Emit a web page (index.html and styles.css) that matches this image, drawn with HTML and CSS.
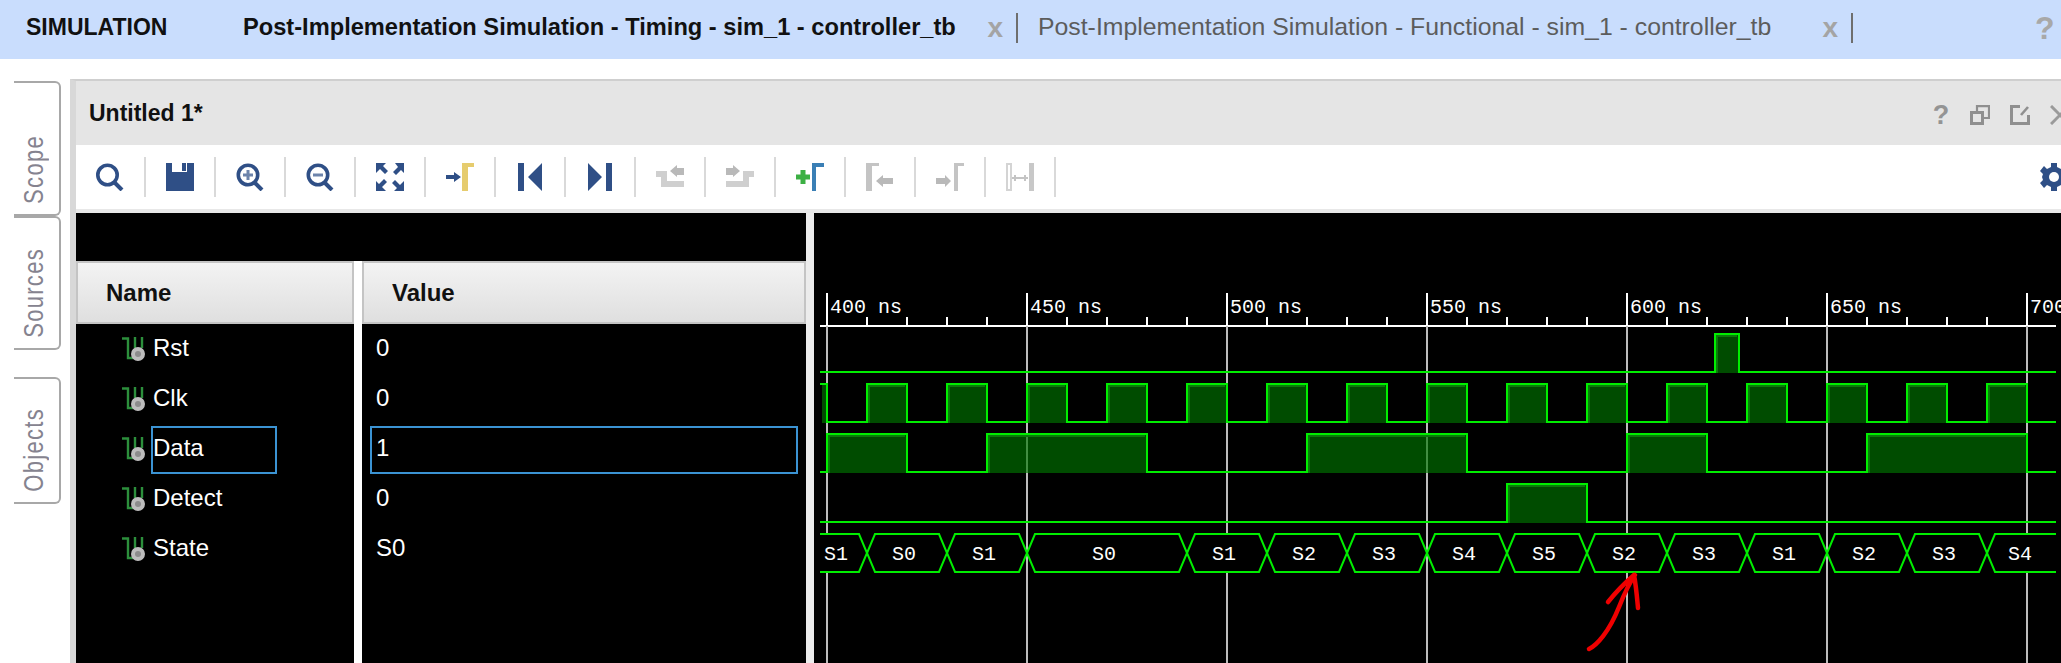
FILE: index.html
```html
<!DOCTYPE html>
<html lang="en">
<head>
    <meta charset="UTF-8">
    <meta name="viewport" content="width=device-width, initial-scale=1.0">
    <title>Simulation - Waveform</title>
    <link rel="stylesheet" href="styles.css">
</head>
<body>
    <div class="topbar">
        <div class="app-name">SIMULATION</div>
        <div class="tab tab-active">
            <span>Post-Implementation Simulation - Timing - sim_1 - controller_tb</span>
            <span class="tab-close">x</span>
        </div>
        <div class="tab">
            <span>Post-Implementation Simulation - Functional - sim_1 - controller_tb</span>
            <span class="tab-close">x</span>
        </div>
        <div class="top-help">?</div>
    </div>

    <div class="workspace">
        <div class="side-tabs">
            <div class="side-tab tab-scope"><span>Scope</span></div>
            <div class="side-tab tab-sources"><span>Sources</span></div>
            <div class="side-tab tab-objects"><span>Objects</span></div>
        </div>

        <div class="panel">
            <div class="titlebar">
                <div class="panel-title">Untitled 1*</div>
                <div class="title-tools">
                    <span class="title-help">?</span>
                    <svg class="title-icon" viewBox="0 0 20 20"><path d="M7 6V1.2H19V13H14" fill="none" stroke="#8f8f8f" stroke-width="2.2"/><rect x="1.5" y="7.5" width="11" height="11" fill="none" stroke="#8f8f8f" stroke-width="3"/></svg>
                    <svg class="title-icon" viewBox="0 0 20 20"><path d="M10 1.5H1.5V18.5H18.5V10" fill="none" stroke="#8f8f8f" stroke-width="3"/><path d="M11 10l7-8" stroke="#8f8f8f" stroke-width="2.6"/></svg>
                    <svg class="title-icon" viewBox="0 0 20 20"><path d="M1 1l18 18M19 1L1 19" fill="none" stroke="#9a9a9a" stroke-width="3"/></svg>
                </div>
            </div>

            <div class="toolbar">
                <div class="tool"><svg viewBox="0 0 28 28"><circle cx="11.5" cy="12" r="9.7" fill="none" stroke="#2f4f86" stroke-width="3.6"/><path d="M18 19l8 8" stroke="#2f4f86" stroke-width="4"/></svg></div>
                <div class="tool"><svg viewBox="0 0 28 28"><path d="M0 0h6v9h15V0h7v28H0z" fill="#2f4f86"/><path d="M16 0h4v8h-4z" fill="#2f4f86"/></svg></div>
                <div class="tool"><svg viewBox="0 0 28 28"><circle cx="12" cy="12" r="9.7" fill="none" stroke="#2f4f86" stroke-width="3.6"/><path d="M18 19l8 8" stroke="#2f4f86" stroke-width="4"/><path d="M12 7v10M7 12h10" stroke="#6d84ab" stroke-width="3"/></svg></div>
                <div class="tool"><svg viewBox="0 0 28 28"><circle cx="12" cy="12" r="9.7" fill="none" stroke="#2f4f86" stroke-width="3.6"/><path d="M18 19l8 8" stroke="#2f4f86" stroke-width="4"/><path d="M7 12h10" stroke="#6d84ab" stroke-width="3"/></svg></div>
                <div class="tool"><svg viewBox="0 0 28 28" fill="#2f4f86"><path d="M0 0h10L7 3l5 5-3 3-5-5-4 4zM28 0v10l-3-3-5 5-3-3 5-5-3-4zM0 28V18l3 3 5-5 3 3-5 5 4 4zM28 28H18l3-3-5-5 3-3 5 5 4-4z"/></svg></div>
                <div class="tool"><svg viewBox="0 0 28 28"><path d="M16 0h12v4H22v24h-6z" fill="#e6cc6e"/><path d="M0 12h8V9l7 5-7 5v-3H0z" fill="#2f4f86"/></svg></div>
                <div class="tool"><svg viewBox="0 0 28 28" fill="#2f4f86"><path d="M2 0h6v28H2zM26 0v28L12 14z"/></svg></div>
                <div class="tool"><svg viewBox="0 0 28 28" fill="#2f4f86"><path d="M20 0h6v28h-6zM2 0v28l14-14z"/></svg></div>
                <div class="tool"><svg viewBox="0 0 28 28"><path d="M0 11h8v10h20" fill="none" stroke="#cfcfcf" stroke-width="6"/><path d="M14 8l7-6v3h7v7h-7v2z" fill="#b9b9b9"/></svg></div>
                <div class="tool"><svg viewBox="0 0 28 28"><path d="M28 11h-8v10H0" fill="none" stroke="#cfcfcf" stroke-width="6"/><path d="M14 8L7 2v3H0v7h7v2z" fill="#b9b9b9"/></svg></div>
                <div class="tool"><svg viewBox="0 0 28 28"><path d="M0 14h14M7 7v14" stroke="#3cb044" stroke-width="5"/><path d="M18 28V2h10" fill="none" stroke="#3a7fb5" stroke-width="4"/></svg></div>
                <div class="tool"><svg viewBox="0 0 28 28"><path d="M0 28V0h13v3H6v25z" fill="#c4c4c4"/><path d="M10 18l7-6v3h10v6H17v3z" fill="#b9b9b9"/></svg></div>
                <div class="tool"><svg viewBox="0 0 28 28"><path d="M18 28V0h10v3h-6v25z" fill="#c4c4c4"/><path d="M0 15h9v-3l6 6-6 6v-3H0z" fill="#b9b9b9"/></svg></div>
                <div class="tool"><svg viewBox="0 0 28 28"><path d="M1 1h4v26H1z" fill="none" stroke="#d4d4d4" stroke-width="2"/><path d="M23 0h5v28h-5z" fill="#c8c8c8"/><path d="M6 15h16M9 12v6M19 12v6" stroke="#c4c4c4" stroke-width="2"/></svg></div>
                <svg class="gear" viewBox="0 0 28 28"><path d="M11 0h6v4l4 2 3-3 4 5-3 3 1 3-1 3 3 3-4 5-3-3-4 2v4h-6v-4l-4-2-3 3-4-5 3-3-1-3 1-3-3-3 4-5 3 3 4-2z" fill="#2f4f86"/><circle cx="14" cy="14" r="5" fill="#fff"/></svg>
            </div>

            <div class="views">
                <div class="names">
                    <div class="names-top"></div>
                    <div class="columns">
                        <div class="col col-name">
                            <div class="col-head">Name</div>
                            <div class="row"><svg class="sig-icon" viewBox="0 0 24 24"><use href="#sig"/></svg><span class="cell name-cell">Rst</span></div>
                            <div class="row"><svg class="sig-icon" viewBox="0 0 24 24"><use href="#sig"/></svg><span class="cell name-cell">Clk</span></div>
                            <div class="row"><svg class="sig-icon" viewBox="0 0 24 24"><use href="#sig"/></svg><span class="cell name-cell selected">Data</span></div>
                            <div class="row"><svg class="sig-icon" viewBox="0 0 24 24"><use href="#sig"/></svg><span class="cell name-cell">Detect</span></div>
                            <div class="row"><svg class="sig-icon" viewBox="0 0 24 24"><use href="#sig"/></svg><span class="cell name-cell">State</span></div>
                        </div>
                        <div class="col col-value">
                            <div class="col-head">Value</div>
                            <div class="row"><span class="cell value-cell">0</span></div>
                            <div class="row"><span class="cell value-cell">0</span></div>
                            <div class="row"><span class="cell value-cell selected">1</span></div>
                            <div class="row"><span class="cell value-cell">0</span></div>
                            <div class="row"><span class="cell value-cell">S0</span></div>
                        </div>
                    </div>
                </div>

                <div class="wave">
                    <!-- viewBox keeps the screen x/y so the 4px per ns grid is easy to read -->
                    <svg class="wave-svg" viewBox="814 213 1247 450">
                        <defs>
                            <g id="sig">
                                <path d="M0 1.5h6V21h5" fill="none" stroke="#2c8f3c" stroke-width="2.4"/>
                                <path d="M13 0v11M20 0v11" stroke="#2c8f3c" stroke-width="2.4"/>
                                <circle cx="16" cy="17" r="5" fill="#8c8c8c" stroke="#bdbdbd" stroke-width="4"/>
                            </g>
                        </defs>

                        <g class="grid-top">
                            <path d="M827 293V326M1027 293V326M1227 293V326M1427 293V326M1627 293V326M1827 293V326M2027 293V326"/>
                            <path d="M820 326H2056"/>
                            <path d="M867 317V326M907 317V326M947 317V326M987 317V326M1067 317V326M1107 317V326M1147 317V326M1187 317V326M1267 317V326M1307 317V326M1347 317V326M1387 317V326M1467 317V326M1507 317V326M1547 317V326M1587 317V326M1667 317V326M1707 317V326M1747 317V326M1787 317V326M1867 317V326M1907 317V326M1947 317V326M1987 317V326"/>
                        </g>
                        <path class="grid" d="M827 326V663M1027 326V663M1227 326V663M1427 326V663M1627 326V663M1827 326V663M2027 326V663"/>

                        <g class="axis-label">
                            <text x="830" y="313">400 ns</text>
                            <text x="1030" y="313">450 ns</text>
                            <text x="1230" y="313">500 ns</text>
                            <text x="1430" y="313">550 ns</text>
                            <text x="1630" y="313">600 ns</text>
                            <text x="1830" y="313">650 ns</text>
                            <text x="2030" y="313">700 ns</text>
                        </g>

                        <!-- high regions -->
                        <path class="fill" d="M1715 334h24v39h-24z"/>
                        <path class="fill" d="M822 384h5v39h-5zM867 384h40v39h-40zM947 384h40v39h-40zM1027 384h40v39h-40zM1107 384h40v39h-40zM1187 384h40v39h-40zM1267 384h40v39h-40zM1347 384h40v39h-40zM1427 384h40v39h-40zM1507 384h40v39h-40zM1587 384h40v39h-40zM1667 384h40v39h-40zM1747 384h40v39h-40zM1827 384h40v39h-40zM1907 384h40v39h-40zM1987 384h40v39h-40z"/>
                        <path class="fill" d="M827 434h80v39h-80zM987 434h160v39H987zM1307 434h160v39h-160zM1627 434h80v39h-80zM1867 434h160v39h-160z"/>
                        <path class="fill" d="M1507 484h80v39h-80z"/>

                        <!-- inner edge of each high region -->
                        <path class="edge" d="M1717 373V336H1737"/>
                        <path class="edge" d="M869 423V386H905M949 423V386H985M1029 423V386H1065M1109 423V386H1145M1189 423V386H1225M1269 423V386H1305M1349 423V386H1385M1429 423V386H1465M1509 423V386H1545M1589 423V386H1625M1669 423V386H1705M1749 423V386H1785M1829 423V386H1865M1909 423V386H1945M1989 423V386H2025"/>
                        <path class="edge" d="M829 473V436H905M989 473V436H1145M1309 473V436H1465M1629 473V436H1705M1869 473V436H2025"/>
                        <path class="edge" d="M1509 523V486H1585"/>

                        <path class="line" d="M820 372H1715V334H1739V372H2056"/>
                        <path class="line" d="M820 384H827V422H867V384H907V422H947V384H987V422H1027V384H1067V422H1107V384H1147V422H1187V384H1227V422H1267V384H1307V422H1347V384H1387V422H1427V384H1467V422H1507V384H1547V422H1587V384H1627V422H1667V384H1707V422H1747V384H1787V422H1827V384H1867V422H1907V384H1947V422H1987V384H2027V422H2056"/>
                        <path class="line" d="M820 472H827V434H907V472H987V434H1147V472H1307V434H1467V472H1627V434H1707V472H1867V434H2027V472H2056"/>
                        <path class="line" d="M820 522H1507V484H1587V522H2056"/>

                        <!-- State bus -->
                        <path class="bus" d="M820 534H859L867 553L859 572H820"/>
                        <path class="bus" d="M875 534h64l8 19l-8 19h-64l-8-19z"/>
                        <path class="bus" d="M955 534h64l8 19l-8 19h-64l-8-19z"/>
                        <path class="bus" d="M1035 534h144l8 19l-8 19h-144l-8-19z"/>
                        <path class="bus" d="M1195 534h64l8 19l-8 19h-64l-8-19z"/>
                        <path class="bus" d="M1275 534h64l8 19l-8 19h-64l-8-19z"/>
                        <path class="bus" d="M1355 534h64l8 19l-8 19h-64l-8-19z"/>
                        <path class="bus" d="M1435 534h64l8 19l-8 19h-64l-8-19z"/>
                        <path class="bus" d="M1515 534h64l8 19l-8 19h-64l-8-19z"/>
                        <path class="bus" d="M1595 534h64l8 19l-8 19h-64l-8-19z"/>
                        <path class="bus" d="M1675 534h64l8 19l-8 19h-64l-8-19z"/>
                        <path class="bus" d="M1755 534h64l8 19l-8 19h-64l-8-19z"/>
                        <path class="bus" d="M1835 534h64l8 19l-8 19h-64l-8-19z"/>
                        <path class="bus" d="M1915 534h64l8 19l-8 19h-64l-8-19z"/>
                        <path class="bus" d="M2056 534H1995l-8 19l8 19H2056"/>

                        <g class="bus-label">
                            <text x="836" y="560">S1</text>
                            <text x="904" y="560">S0</text>
                            <text x="984" y="560">S1</text>
                            <text x="1104" y="560">S0</text>
                            <text x="1224" y="560">S1</text>
                            <text x="1304" y="560">S2</text>
                            <text x="1384" y="560">S3</text>
                            <text x="1464" y="560">S4</text>
                            <text x="1544" y="560">S5</text>
                            <text x="1624" y="560">S2</text>
                            <text x="1704" y="560">S3</text>
                            <text x="1784" y="560">S1</text>
                            <text x="1864" y="560">S2</text>
                            <text x="1944" y="560">S3</text>
                            <text x="2020" y="560">S4</text>
                        </g>

                        <!-- hand drawn arrow -->
                        <path class="pen" d="M1589 649C1597 645 1609 632 1619 607C1625 592 1630 582 1635 575M1608 602C1616 592 1626 582 1634 575C1636 585 1637 597 1638 608"/>
                    </svg>
                </div>
            </div>
        </div>
    </div>
</body>
</html>
```

FILE: styles.css
```css
html, body {
    margin: 0;
    padding: 0;
    background-color: #fff;
}
body {
    width: 2061px;
    height: 663px;
    overflow: hidden;
    font-family: "Liberation Sans", Arial, sans-serif;
}
svg {
    display: block;
}

/* top bar */
.topbar {
    display: flex;
    align-items: center;
    height: 59px;
    padding: 0 0 3px 26px;
    box-sizing: border-box;
    background-color: #c9ddfd;
    font-size: 24.8px;
    color: #5c5c5c;
}
.app-name {
    width: 217px;
    margin-bottom: 2px;
    font-size: 23px;
    font-weight: bold;
    color: #111;
}
.tab {
    display: flex;
    align-items: center;
    justify-content: space-between;
    width: 815px;
    height: 30px;
    margin-left: 20px;
    padding-right: 13px;
    box-sizing: border-box;
    border-right: 2px solid #6e6e6e;
    line-height: 26px;
    white-space: nowrap;
}
.tab span:first-child {
    margin-bottom: 3px;
}
.tab-active {
    width: 775px;
    margin-left: 0;
    font-size: 23.65px;
    font-weight: bold;
    color: #111;
}
.tab-close {
    font-size: 28px;
    font-weight: bold;
    color: #a4a4a4;
}
.top-help {
    margin-left: 182px;
    font-size: 32px;
    font-weight: bold;
    color: #a8a8a8;
}

/* left tabs and panel */
.workspace {
    display: flex;
    height: 604px;
    padding-top: 20px;
    box-sizing: border-box;
}
.side-tabs {
    flex: 0 0 70px;
    padding: 2px 0 0 14px;
    box-sizing: border-box;
}
.side-tab {
    display: flex;
    justify-content: flex-end;
    width: 47px;
    box-sizing: border-box;
    border: 2px solid #a8a8a8;
    border-left: none;
    border-radius: 0 6px 6px 0;
    padding: 0 0 10px 7px;
    flex-direction: column;
    align-items: flex-start;
    color: #85838f;
    font-size: 22px;
}
.side-tab span {
    writing-mode: vertical-rl;
    letter-spacing: 1.3px;
    /* the tab labels are taller than they are wide in the capture */
    transform: rotate(180deg) scaleX(1.25);
    line-height: 26px;
}
.tab-scope {
    height: 135px;
}
.tab-sources {
    height: 134px;
    margin-bottom: 27px;
}
.tab-objects {
    height: 127px;
}
.panel {
    flex: 1;
    min-width: 0;
    border-left: 6px solid #d8d8d8;
    border-top: 2px solid #cfcfcf;
}
.titlebar {
    display: flex;
    align-items: center;
    justify-content: space-between;
    height: 64px;
    padding-left: 13px;
    background-color: #e5e5e5;
}
.panel-title {
    font-size: 23px;
    font-weight: bold;
    color: #111;
}
.title-tools {
    display: flex;
    align-items: center;
    gap: 20px;
    margin-right: -9px;
    padding-top: 3px;
}
.title-help {
    width: 18px;
    font-size: 27px;
    font-weight: bold;
    line-height: 30px;
    text-align: center;
    color: #949494;
}
.title-icon {
    width: 20px;
    height: 20px;
}

/* toolbar */
.toolbar {
    display: flex;
    height: 52px;
    padding-top: 12px;
    border-bottom: 4px solid #e8e8e8;
    background-color: #fff;
}
.tool {
    display: flex;
    align-items: center;
    justify-content: center;
    width: 70px;
    height: 40px;
    box-sizing: border-box;
    border-right: 2px solid #d9d9d9;
}
.tool svg {
    width: 28px;
    height: 28px;
}
.gear {
    width: 28px;
    height: 28px;
    margin: 6px -7px 0 auto;
}

/* signal list */
.views {
    display: flex;
    gap: 8px;
    height: 450px;
    background-color: #ececec;
}
.names {
    flex: 0 0 730px;
    background-color: #000;
}
.names-top {
    height: 48px;
}
.columns {
    display: flex;
    gap: 8px;
    height: 402px;
    background-color: #fff;
}
.col {
    background-color: #000;
    color: #fff;
    font-size: 24px;
}
.col-name {
    flex: 0 0 278px;
}
.col-value {
    flex: 1;
}
.col-head {
    height: 63px;
    box-sizing: border-box;
    border: 2px solid #c4c4c4;
    line-height: 59px;
    padding-left: 28px;
    font-weight: bold;
    color: #111;
    background: linear-gradient(#f3f3f3, #dfdfdf);
}
.row {
    display: flex;
    align-items: flex-start;
    height: 50px;
}
.sig-icon {
    width: 24px;
    height: 24px;
    margin: 13px 5px 0 46px;
}
.cell {
    display: flex;
    align-items: center;
    height: 48px;
    margin-top: 2px;
    box-sizing: border-box;
    border: 2px solid transparent;
    padding-bottom: 4px;
}
.name-cell {
    width: 126px;
}
.value-cell {
    width: 428px;
    margin-left: 8px;
    padding-left: 4px;
}
.selected {
    border-color: #3b93d3;
}

/* waveform */
.wave {
    flex: 1;
    min-width: 0;
    background-color: #000;
}
.wave-svg {
    width: 1247px;
    height: 450px;
}
.grid-top path {
    fill: none;
    stroke: #fff;
    stroke-width: 2;
}
.grid {
    fill: none;
    stroke: #bcbcbc;
    stroke-width: 2;
}
.axis-label text,
.bus-label text {
    font-family: "Liberation Mono", "DejaVu Sans Mono", monospace;
    font-size: 20px;
    fill: #fff;
}
.bus-label text {
    text-anchor: middle;
}
.fill {
    fill: #007400;
    fill-opacity: 0.65;
}
.edge {
    fill: none;
    stroke: #0b7a0b;
    stroke-width: 2;
}
.line {
    fill: none;
    stroke: #00ee00;
    stroke-width: 2;
}
.bus {
    fill: #000;
    stroke: #00ee00;
    stroke-width: 2;
}
.pen {
    fill: none;
    stroke: #f00000;
    stroke-width: 4.5;
    stroke-linecap: round;
    stroke-linejoin: round;
}
```
